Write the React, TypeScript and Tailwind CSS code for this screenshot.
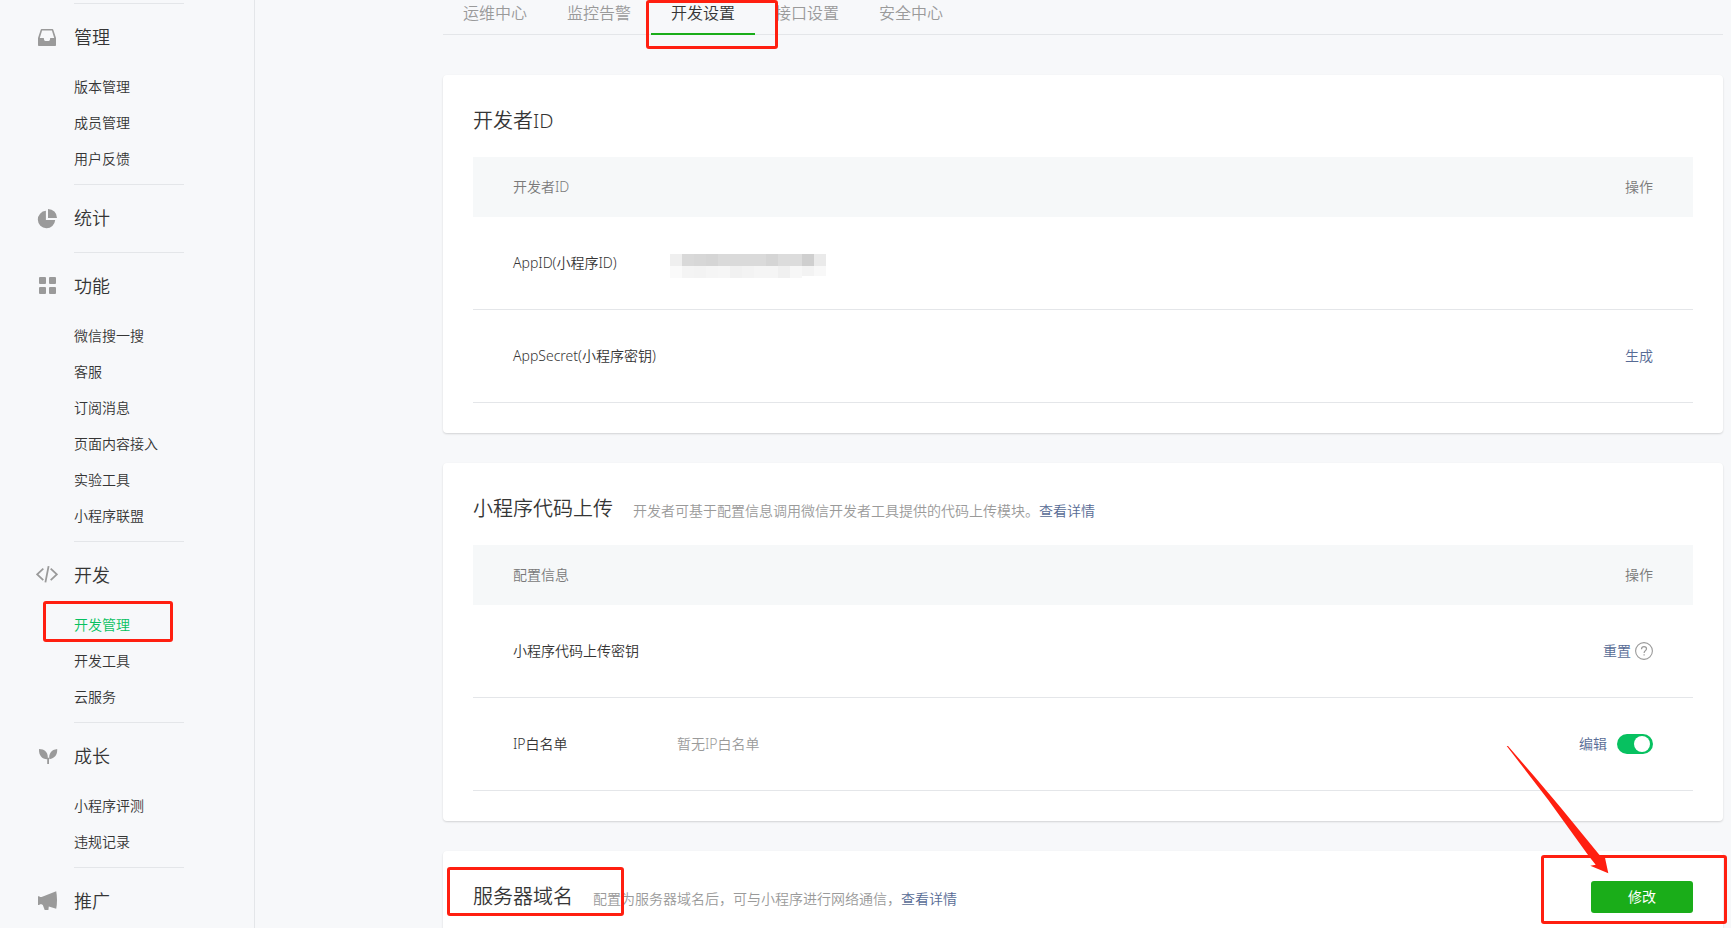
import React from "react";

const icons: Record<string, React.ReactNode> = {
  manage: (
    <path
      fillRule="evenodd"
      d="M5.6 3h10.8q.7 0 .9.7L20 12v7.2q0 .8-.8.8H2.8q-.8 0-.8-.8V12l2.7-8.3q.2-.7.9-.7ZM6.1 4.6 3.8 12h3.6q.6 0 .6.6v1q0 1.4 1.4 1.4h3.2q1.4 0 1.4-1.4v-1q0-.6.6-.6h3.6l-2.3-7.4Z"
    />
  ),
  stats: (
    <path d="M9.9 3.8v9.3h9.3A8.7 8.7 0 1 1 9.9 3.8ZM12 2a8.9 8.9 0 0 1 9 9h-9Z" />
  ),
  features: (
    <>
      <rect x="3" y="2" width="7" height="7" rx="1" />
      <rect x="13" y="2" width="7" height="7" rx="1" />
      <rect x="3" y="12" width="7" height="7" rx="1" />
      <rect x="13" y="12" width="7" height="7" rx="1" />
    </>
  ),
  develop: (
    <path
      fill="none"
      stroke="currentColor"
      strokeWidth="1.8"
      d="M7.3 4.6 1.2 10.4l6.1 5.8M14.7 4.6l6.1 5.8-6.1 5.8M12.6 2.2 9.4 18.4"
    />
  ),
  grow: (
    <path d="M3 4.1c5.6.1 8.8 3 8.8 8.400l-.2 1.700C6.500 14.500 2.600 11 3 4.100ZM21.200 4.100c.3 6-2.300 9.200-7.900 10.200-.6-5.500 2-9.600 7.900-10.200ZM11.200 12.800h1.800V19h-1.800Z" />
  ),
  promote: (
    <path d="M2 6.200h1.600v.8h2L20.200 1.300q.8 4 .8 8.700t-.8 8.800l-7.400-2.400L12.400 20H8.700L6.800 14.900 5.600 14.200h-2v.8H2Z" />
  ),
};

const menu = [
  { icon: "manage", title: "管理", items: ["版本管理", "成员管理", "用户反馈"] },
  { icon: "stats", title: "统计", items: [] },
  {
    icon: "features",
    title: "功能",
    items: ["微信搜一搜", "客服", "订阅消息", "页面内容接入", "实验工具", "小程序联盟"],
  },
  { icon: "develop", title: "开发", items: ["开发管理", "开发工具", "云服务"] },
  { icon: "grow", title: "成长", items: ["小程序评测", "违规记录"] },
  { icon: "promote", title: "推广", items: [] },
];

const tabs = ["运维中心", "监控告警", "开发设置", "接口设置", "安全中心"];

const maskTop = ["#efefef", "#d9d9d9", "#d7d7d7", "#d5d5d5", "#dadada", "#dadada", "#dadada", "#dadada", "#d5d5d5", "#dcdcdc", "#dcdcdc", "#cfcfcf", "#eaeaea"];
const maskBottom = ["#fafafa", "#f4f4f4", "#f3f3f3", "#f5f5f5", "#f6f6f6", "#f1f1f1", "#f3f3f3", "#f5f5f5", "#f5f5f5", "#f0f0f0", "#f7f7f7", "#f3f3f3", "#f8f8f8"];

function Marker({ className }: { className: string }) {
  return (
    <div
      className={`absolute border-3 border-[#ff1f10] rounded-[3px] pointer-events-none z-10 ${className}`}
    />
  );
}

function Sidebar() {
  return (
    <aside className="w-[255px] shrink-0 border-r border-[#e4e6e9] pt-[3px]">
      {menu.map((group) => (
        <section key={group.title} className="pb-[2px]">
          <hr className="ml-[74px] w-[110px] border-[#e4e6e9]" />
          <h2 className="flex items-center gap-4 h-[65px] pl-9 text-lg font-[350]">
            <svg
              viewBox="0 0 22 22"
              className="w-[22px] h-[22px] text-[#9a9a9a]"
              fill="currentColor"
              aria-hidden="true"
            >
              {icons[group.icon]}
            </svg>
            {group.title}
          </h2>
          {group.items.length > 0 && (
            <ul className="pl-[74px] pb-[5px] text-sm/9">
              {group.items.map((item) => (
                <li key={item} className="relative">
                  <a href="#" className={item === "开发管理" ? "text-[#07c160]" : ""}>
                    {item}
                  </a>
                  {item === "开发管理" && (
                    <Marker className="-left-[31px] -top-[6px] w-[130px] h-[41px]" />
                  )}
                </li>
              ))}
            </ul>
          )}
        </section>
      ))}
    </aside>
  );
}

function Card({
  title,
  desc,
  action,
  children,
}: {
  title: string;
  desc?: string;
  action?: React.ReactNode;
  children?: React.ReactNode;
}) {
  return (
    <section className="relative bg-white rounded-sm p-[30px] mb-[30px] shadow-[0_1px_2px_rgba(0,0,0,0.15)]">
      <div className="flex items-center justify-between h-8 mb-5">
        <div className="flex items-baseline gap-5">
          <h2 className="text-xl font-[350]">{title}</h2>
          {desc && (
            <p className="text-sm text-[#9a9a9a]">
              {desc}
              <a href="#" className="text-[#576b95]">
                查看详情
              </a>
            </p>
          )}
        </div>
        {action}
      </div>
      {children}
    </section>
  );
}

function Table({ head, children }: { head: string; children: React.ReactNode }) {
  return (
    <table className="w-full border-separate border-spacing-0 text-sm text-left">
      <thead>
        <tr className="h-[60px] bg-[#f6f8f9] text-[#7a7a7a]">
          <th colSpan={2} className="pl-10 font-[350]">
            {head}
          </th>
          <th className="pr-10 font-[350] text-right">操作</th>
        </tr>
      </thead>
      <tbody>{children}</tbody>
    </table>
  );
}

function Row({
  label,
  value,
  children,
}: {
  label: string;
  value?: React.ReactNode;
  children?: React.ReactNode;
}) {
  return (
    <tr className="h-[93px] *:border-b *:border-[#e4e6e9]">
      <td className="w-[197px] pl-10 whitespace-nowrap">{label}</td>
      <td>{value}</td>
      <td className="pr-10">
        <div className="flex items-center justify-end text-[#576b95]">{children}</div>
      </td>
    </tr>
  );
}

function App() {
  return (
    <div
      className="flex h-screen overflow-hidden bg-[#f7f8fa] text-[#353535] font-[350]"
      style={{ fontFamily: '"Noto Sans", "Noto Sans CJK SC", sans-serif' }}
    >
      <Sidebar />

      <main className="flex-1 pl-[188px] pr-2">
        {/* Tabs */}
        <nav className="flex border-b border-[#e4e6e9] mb-10 text-base/[26px]">
          {tabs.map((tab) => (
            <div key={tab} className="relative -mb-px">
              <a
                href="#"
                className={`block px-5 pb-[7px] border-b-2 ${
                  tab === "开发设置" ? "border-[#1aad19]" : "border-transparent text-[#9a9a9a]"
                }`}
              >
                {tab}
              </a>
              {tab === "开发设置" && <Marker className="-left-[5px] top-0 w-[132px] h-[49px]" />}
            </div>
          ))}
        </nav>

        <Card title="开发者ID">
          <Table head="开发者ID">
            <Row
              label="AppID(小程序ID)"
              value={
                <svg
                  width="156"
                  height="24"
                  className="mt-[6px]"
                  role="img"
                  aria-label="AppID"
                  shapeRendering="crispEdges"
                >
                  {maskTop.map((fill, i) => (
                    <rect key={i} x={i * 12} y="0" width="12" height="12" fill={fill} />
                  ))}
                  {maskBottom.map((fill, i) => (
                    <rect key={i} x={i * 12} y="12" width="12" height={i > 10 ? 10 : 12} fill={fill} />
                  ))}
                </svg>
              }
            />
            <Row label="AppSecret(小程序密钥)">
              <a href="#">生成</a>
            </Row>
          </Table>
        </Card>

        <Card
          title="小程序代码上传"
          desc="开发者可基于配置信息调用微信开发者工具提供的代码上传模块。"
        >
          <Table head="配置信息">
            <Row label="小程序代码上传密钥">
              <a href="#">重置</a>
              <svg
                viewBox="0 0 18 18"
                className="w-[18px] h-[18px] ml-1 text-[#9a9a9a]"
                fill="none"
                stroke="currentColor"
                aria-hidden="true"
              >
                <circle cx="9" cy="9" r="8.4" strokeWidth="1.1" />
                <path
                  strokeWidth="1.2"
                  d="M6.5 7.2C6.5 5.5 7.5 4.6 9 4.6s2.500.9 2.500 2.200c0 1.800-2.400 1.900-2.400 4.100M9.100 12.200v1.400"
                />
              </svg>
            </Row>
            <Row
              label="IP白名单"
              value={<span className="pl-[7px] text-[#9a9a9a]">暂无IP白名单</span>}
            >
              <a href="#">编辑</a>
              <input
                type="checkbox"
                defaultChecked
                aria-label="IP白名单"
                className="appearance-none flex items-center justify-end w-9 h-5 ml-[10px] px-[3px] rounded-full bg-[#07c160] before:block before:w-4 before:h-4 before:rounded-full before:bg-white"
              />
            </Row>
          </Table>
        </Card>

        <div className="relative">
          <Card
            title="服务器域名"
            desc="配置为服务器域名后，可与小程序进行网络通信，"
            action={
              <button className="w-[102px] h-8 rounded-[3px] bg-[#1aad19] text-white text-sm font-normal">
                修改
              </button>
            }
          />
          <Marker className="left-1 top-4 w-[177px] h-[49px]" />
          <Marker className="-right-1 top-1 w-[186px] h-[69px]" />
          <svg
            viewBox="0 0 105 129"
            className="absolute right-[113px] -top-[106px] w-[105px] h-[129px] z-10 pointer-events-none"
            fill="#ff1f10"
            aria-hidden="true"
          >
            <path d="M1.700 1 3 1 29 31 55 61.700 94.300 109.700 100 112.700 103.300 128.300 85.300 120.700 90.700 119.700 84.300 111.700 43.300 55Z" />
          </svg>
        </div>
      </main>
    </div>
  );
}

export default App;
